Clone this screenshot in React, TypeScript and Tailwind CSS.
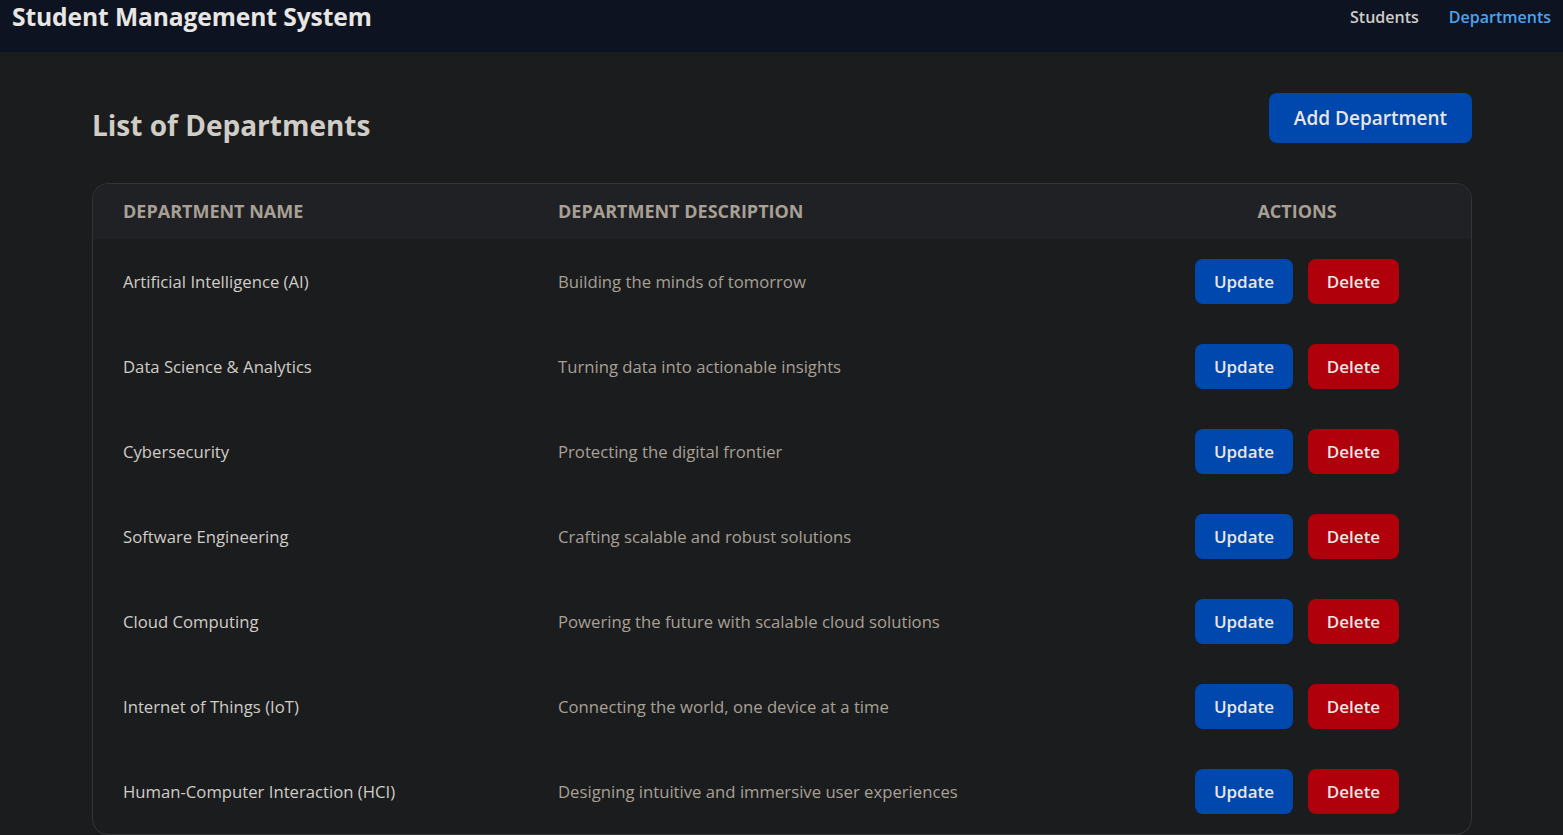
import React from "react";

const departments = [
  { name: "Artificial Intelligence (AI)", description: "Building the minds of tomorrow" },
  { name: "Data Science & Analytics", description: "Turning data into actionable insights" },
  { name: "Cybersecurity", description: "Protecting the digital frontier" },
  { name: "Software Engineering", description: "Crafting scalable and robust solutions" },
  { name: "Cloud Computing", description: "Powering the future with scalable cloud solutions" },
  { name: "Internet of Things (IoT)", description: "Connecting the world, one device at a time" },
  { name: "Human-Computer Interaction (HCI)", description: "Designing intuitive and immersive user experiences" },
];

const App: React.FC = () => {
  return (
    <div className="min-h-screen bg-[#1b1c1e] font-['Open_Sans',sans-serif]">
      {/* Navbar */}
      <nav className="h-[52px] bg-[#0d1321] flex items-start justify-between pl-3 pr-3">
        <h1 className="text-[24.6px] font-bold text-[#e8e6e3] leading-[34px] tracking-[-0.1px]">
          Student Management System
        </h1>
        <div className="flex gap-[30px] text-[16px] font-semibold leading-[34px]">
          <a className="text-[#d0ccc6]">Students</a>
          <a className="text-[#4ba3f0]">Departments</a>
        </div>
      </nav>

      <main className="pl-[92px] pr-[91px] pt-[41px]">
        {/* Heading */}
        <div className="flex items-start justify-between">
          <h2 className="mt-[14px] text-[28px] leading-[36px] font-bold text-[#d0ccc6]">
            List of Departments
          </h2>
          <button className="h-[50px] w-[203px] rounded-lg bg-[#0047ae] text-[19px] font-semibold text-[#e8e6e3]">
            Add Department
          </button>
        </div>

        {/* Table */}
        <div className="mt-[40px] rounded-2xl border border-[#333537] overflow-hidden">
          <div className="grid grid-cols-[435px_1fr_348px] h-[55px] items-center bg-[#202124] text-[18px] font-bold uppercase text-[#a8a095]">
            <div className="pl-[30px]">Department Name</div>
            <div className="pl-[30px]">Department Description</div>
            <div className="text-center">Actions</div>
          </div>
          {departments.map((d) => (
            <div
              key={d.name}
              className="grid grid-cols-[435px_1fr_348px] h-[85px] items-center text-[16.7px]"
            >
              <div className="pl-[30px] text-[#d0ccc6]">{d.name}</div>
              <div className="pl-[30px] text-[#a8a095]">{d.description}</div>
              <div className="flex justify-center gap-[15px]">
                <button className="h-[45px] w-[98px] rounded-lg bg-[#0047ae] text-[17px] font-semibold text-[#e8e6e3]">
                  Update
                </button>
                <button className="h-[45px] w-[91px] rounded-lg bg-[#b0000b] text-[17px] font-semibold text-[#e8e6e3]">
                  Delete
                </button>
              </div>
            </div>
          ))}
        </div>
      </main>
    </div>
  );
};

export default App;
